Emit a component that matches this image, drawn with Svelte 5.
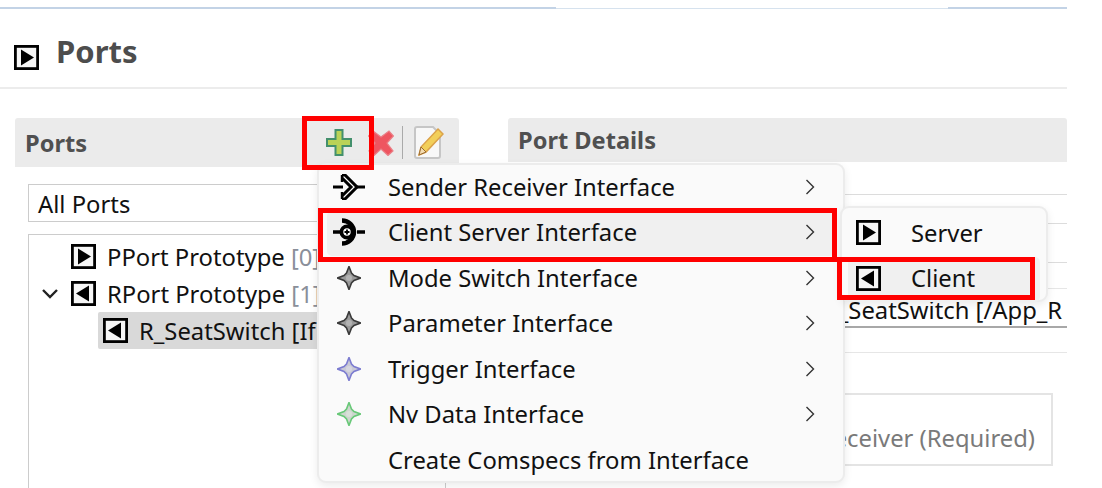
<script>
  const items = [
    { label: 'Sender Receiver Interface', icon: 'sr', arrow: true },
    { label: 'Client Server Interface', icon: 'cs', arrow: true, active: true },
    { label: 'Mode Switch Interface', icon: 'star', color: '#3a3a3a', fill: '#9a9a9a', arrow: true },
    { label: 'Parameter Interface', icon: 'star', color: '#3a3a3a', fill: '#9a9a9a', arrow: true },
    { label: 'Trigger Interface', icon: 'star', color: '#7c7cd0', fill: '#c9c9d6', arrow: true },
    { label: 'Nv Data Interface', icon: 'star', color: '#68c878', fill: '#cdd6cd', arrow: true },
    { label: 'Create Comspecs from Interface', icon: 'none', arrow: false }
  ];
</script>

{#snippet port(dir)}
  <svg class="port" width="25" height="25" viewBox="0 0 25 25">
    <rect x="1.4" y="1.4" width="22.2" height="22.2" fill="#f6f6f6" stroke="#000" stroke-width="2.8" />
    {#if dir === 'p'}
      <path d="M7 4.5 L20 12.5 L7 20.5 Z" fill="#000" />
    {:else}
      <path d="M18 4.5 L5 12.5 L18 20.5 Z" fill="#000" />
    {/if}
  </svg>
{/snippet}

<div class="page">
  <div class="top-rule">
    <span class="strong seg1"></span>
    <span class="faint"></span>
    <span class="strong seg3"></span>
  </div>

  <header class="title">
    {@render port('p')}
    <h1>Ports</h1>
  </header>

  <div class="columns">
    <section class="left">
      <div class="section-head">
        <h2>Ports</h2>
        <div class="tools">
          <svg width="26" height="27" viewBox="0 0 26 27">
            <path d="M9.5 1 H16.5 V10 H25 V17 H16.5 V26 H9.5 V17 H1 V10 H9.5 Z" fill="#bad257" stroke="#43906c" stroke-width="2" />
          </svg>
          <svg class="del" width="26" height="26" viewBox="0 0 26 26">
            <path d="M5 1 L13 7 L21 1 L25.5 6 L19 13 L25 21 L20 25.5 L13 19 L6 25.5 L1 21 L7 13 L0.5 6 Z" fill="#ee5560" stroke="#ea8088" stroke-width="1.2" />
          </svg>
          <span class="tool-sep"></span>
          <svg width="31" height="33" viewBox="0 0 31 33">
            <path d="M2 3 Q2 1 4 1 H20 L27 8 V30 Q27 32 25 32 H4 Q2 32 2 30 Z" fill="#f8f8f8" stroke="#c6c6c6" stroke-width="2" />
            <path d="M25 3 L30 8 L13 26 L6 29 L8 21 Z" fill="#f2cf5a" stroke="#dba24a" stroke-width="1.5" />
            <path d="M8 21 L13 26 L6 29 Z" fill="#f4dcb0" stroke="#9a6a30" stroke-width="1" />
          </svg>
        </div>
      </div>
      <div class="filter">All Ports</div>
      <div class="tree">
        <div class="row">
          {@render port('p')}
          <span>PPort Prototype <em>[0]</em></span>
        </div>
        <div class="row">
          <svg class="twist" width="18" height="12" viewBox="0 0 18 12">
            <path d="M2 2 L9 9 L16 2" fill="none" stroke="#222" stroke-width="2.4" />
          </svg>
          {@render port('r')}
          <span>RPort Prototype <em>[1]</em></span>
        </div>
        <div class="row selected">
          {@render port('r')}
          <span>R_SeatSwitch [If</span>
        </div>
      </div>
    </section>

    <section class="right">
      <div class="section-head details-head"><h2>Port Details</h2></div>
      <div class="line h33"></div>
      <div class="line h29"></div>
      <div class="line h39"></div>
      <div class="line h26 pale"></div>
      <div class="field">R_SeatSwitch [/App_R</div>
      <div class="line h25 pale"></div>
      <div class="kind">Sender Receiver (Required)</div>
    </section>
  </div>

  <div class="menu">
    {#each items as item}
      <div class="item" class:active={item.active}>
        <span class="icon">
          {#if item.icon === 'sr'}
            <svg width="32" height="26" viewBox="0 0 32 26">
              <path d="M0 13 H10 M22 13 H32" stroke="#000" stroke-width="3.2" />
              <path d="M9 1 H12 L24 13 L12 25 H9" fill="none" stroke="#000" stroke-width="3" />
              <path d="M9 1 L9 8 M9 18 L9 25" stroke="#000" stroke-width="2.4" />
              <path d="M9 4 L18 13 L9 22" fill="none" stroke="#000" stroke-width="3" />
            </svg>
          {:else if item.icon === 'cs'}
            <svg width="32" height="28" viewBox="0 0 32 28">
              <path d="M0 14 H8 M24 14 H32" stroke="#000" stroke-width="3.6" />
              <path d="M9 2.5 A12 11.5 0 0 1 9 25.5" fill="none" stroke="#000" stroke-width="4.4" />
              <circle cx="14" cy="14" r="5.6" fill="#fff" stroke="#000" stroke-width="3.8" />
              <path d="M14 11.5 V16.5 M11.5 14 H16.5" stroke="#000" stroke-width="1.8" />
            </svg>
          {:else if item.icon === 'star'}
            <svg width="24" height="24" viewBox="0 0 24 24">
              <path d="M12 0.5 L14.5 7 L17 9.5 L23.5 12 L17 14.5 L14.5 17 L12 23.5 L9.5 17 L7 14.5 L0.5 12 L7 9.5 L9.5 7 Z" fill={item.fill} stroke={item.color} stroke-width="1.6" />
              <circle cx="12" cy="12" r="3" fill="#fff" opacity="0.25" />
            </svg>
          {/if}
        </span>
        <span class="label">{item.label}</span>
        {#if item.arrow}
          <svg class="chev" width="10" height="16" viewBox="0 0 10 16">
            <path d="M1.5 1 L8.5 8 L1.5 15" fill="none" stroke="#333" stroke-width="1.4" />
          </svg>
        {/if}
      </div>
    {/each}
  </div>

  <div class="submenu">
    <div class="item sub">
      {@render port('p')}
      <span class="label">Server</span>
    </div>
    <div class="item sub active">
      {@render port('r')}
      <span class="label">Client</span>
    </div>
  </div>

  <div class="mark mark-add"></div>
  <div class="mark mark-cs"></div>
  <div class="mark mark-client"></div>
</div>

<style>
  :global(body) {
    margin: 0;
    background: #fff;
  }

  .page {
    position: relative;
    width: 1067px;
    height: 488px;
    overflow: hidden;
    background: #fff;
    font-family: "Noto Sans", "Open Sans", sans-serif;
    color: #111;
  }

  .top-rule {
    display: flex;
    align-items: flex-end;
    height: 9px;
  }
  .top-rule span {
    display: block;
  }
  .strong {
    height: 2px;
    background: #c3d3e6;
  }
  .seg1 {
    width: 556px;
  }
  .seg3 {
    width: 119px;
  }
  .faint {
    flex: 1;
    height: 1px;
    background: #d6e2ee;
  }

  .title {
    display: flex;
    align-items: center;
    height: 78px;
    padding-left: 14px;
    gap: 17px;
    border-bottom: 2px solid #ececec;
    box-sizing: content-box;
  }
  .title .port {
    margin-top: 18px;
  }
  h1 {
    margin: 5px 0 0;
    font-size: 31px;
    font-weight: 700;
    color: #4d4d4d;
  }

  .columns {
    display: flex;
    padding: 29px 0 0 15px;
    gap: 49px;
  }

  .left {
    width: 444px;
    flex: none;
  }
  .right {
    flex: 1;
    min-width: 0;
  }

  .section-head {
    display: flex;
    align-items: center;
    justify-content: space-between;
    height: 49px;
    background: #ebebeb;
    border-radius: 3px 3px 0 0;
    padding: 0 10px;
  }
  .details-head {
    height: 44px;
  }
  h2 {
    margin: 0;
    font-size: 23.6px;
    font-weight: 700;
    color: #505050;
  }

  .tools {
    display: flex;
    align-items: center;
    margin-right: 5px;
  }
  .tools .del {
    margin-left: 16px;
  }
  .tool-sep {
    width: 1px;
    height: 33px;
    background: #aaa;
    margin: 0 10px 0 8px;
  }

  .filter {
    margin: 17px 0 0 13px;
    height: 38px;
    border: 1px solid #ccc;
    box-sizing: border-box;
    width: 330px;
    padding-left: 9px;
    font-size: 23.8px;
    line-height: 38px;
  }

  .tree {
    margin: 12px 0 0 13px;
    width: 418px;
    height: 260px;
    border: 1px solid #ccc;
    box-sizing: border-box;
    padding-top: 3px;
  }
  .row {
    display: flex;
    align-items: center;
    gap: 11px;
    height: 37px;
    padding-left: 42px;
    font-size: 23.8px;
    white-space: nowrap;
    overflow: hidden;
  }
  .row .twist {
    margin: 0 1px 0 -30px;
  }
  .row em {
    font-style: normal;
    color: #8a8f9a;
  }
  .selected {
    margin-left: 69px;
    padding-left: 5px;
    background: #d9d9d9;
    border-radius: 2px;
  }

  .line {
    border-bottom: 1px solid #dcdcdc;
    box-sizing: border-box;
  }
  .pale {
    border-bottom-color: #e6e6e6;
  }
  .h33 {
    height: 33px;
  }
  .h29 {
    height: 29px;
  }
  .h39 {
    height: 39px;
  }
  .h26 {
    height: 26px;
  }
  .h25 {
    height: 25px;
  }
  .field {
    height: 39px;
    padding-left: 315px;
    font-size: 23.8px;
    line-height: 42px;
    white-space: nowrap;
    overflow: hidden;
    border-bottom: 2px solid #a8a8a8;
    box-sizing: border-box;
  }

  .kind {
    margin-top: 40px;
    width: 545px;
    height: 73px;
    box-sizing: border-box;
    border: 2px solid #e4e4e4;
    text-align: right;
    padding-right: 16px;
    font-size: 23.8px;
    line-height: 87px;
    color: #7a7a7a;
  }

  .menu,
  .submenu {
    position: absolute;
    background: #fafafa;
    border: 2px solid #ececec;
    border-radius: 9px;
    box-sizing: border-box;
    box-shadow: 0 3px 8px rgba(0, 0, 0, 0.08);
  }
  .menu {
    left: 317px;
    top: 163px;
    width: 528px;
    height: 320px;
    padding: 0 8px;
  }
  .submenu {
    left: 840px;
    top: 206px;
    width: 208px;
    height: 96px;
    padding: 3px 6px;
  }

  .item {
    display: flex;
    align-items: center;
    height: 45.5px;
    padding-bottom: 2px;
    box-sizing: border-box;
    border-radius: 5px;
    font-size: 23.8px;
    white-space: nowrap;
  }
  .item.active {
    background: #f0f0f0;
  }
  .icon {
    width: 44px;
    margin-right: 17px;
    flex: none;
    display: flex;
    justify-content: center;
  }
  .label {
    flex: 1;
  }
  .chev {
    margin-right: 20px;
  }
  .sub {
    padding-left: 8px;
    gap: 30px;
  }

  .mark {
    position: absolute;
    border: 5px solid #f00;
    box-sizing: border-box;
  }
  .mark-add {
    left: 302px;
    top: 116px;
    width: 72px;
    height: 54px;
  }
  .mark-cs {
    left: 318px;
    top: 208px;
    width: 519px;
    height: 54px;
  }
  .mark-client {
    left: 837px;
    top: 257px;
    width: 198px;
    height: 43px;
  }
</style>
